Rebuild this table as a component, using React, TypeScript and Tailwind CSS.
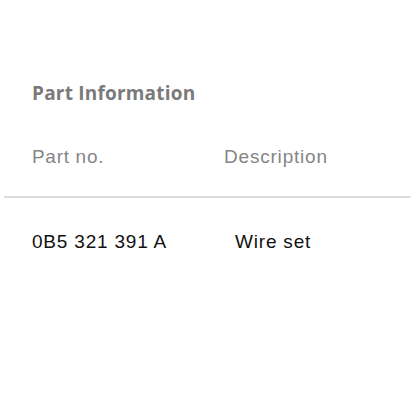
export default function App() {
  return (
    <div className="w-[416px] h-[416px] bg-white">
      <div className="pt-[80px]">
        <div
          className="pl-[32px] text-[19px] leading-[26px] font-bold text-[#7a7a7a] tracking-[0.2px]"
          style={{ fontFamily: '"Open Sans", sans-serif' }}
        >
          Part Information
        </div>
        <div
          className="mt-[40px] mx-[4px] w-[407px]"
          style={{ fontFamily: '"Liberation Sans", Arial, sans-serif' }}
        >
          <div className="flex border-b-2 border-[#dedede] pb-[28px] text-[19px] leading-[22px] text-[#858585] tracking-[0.7px]">
            <div className="pl-[28px] w-[220px]">Part no.</div>
            <div className="tracking-[0.8px]">Description</div>
          </div>
          <div className="flex pt-[33px] text-[19px] leading-[22px] text-[#111] tracking-[0.8px]">
            <div className="pl-[28px] w-[231px]">0B5 321 391 A</div>
            <div>Wire set</div>
          </div>
        </div>
      </div>
    </div>
  );
}
